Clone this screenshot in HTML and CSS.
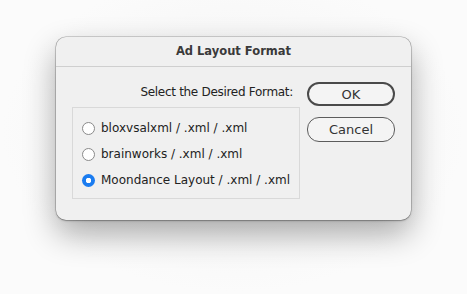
FILE: index.html
```html
<!DOCTYPE html>
<html>
<head>
	<meta charset="UTF-8">
	<title>Ad Layout Format</title>
<link rel="stylesheet" href="styles.css">
</head>
<body>

  <div class="dialog">
    <div class="titel">Ad Layout Format</div>

    <div class="inhalt">
      <div class="links">
        <div class="frage">Select the Desired Format:</div>
        <div class="gruppe">
          <label class="option"><span class="radio"></span>bloxvsalxml / .xml / .xml</label>
          <label class="option"><span class="radio"></span>brainworks / .xml / .xml</label>
          <label class="option"><span class="radio an"></span>Moondance Layout / .xml / .xml</label>
        </div>
      </div>

      <div class="knoepfe">
        <button type="button" class="knopf standard">OK</button>
        <button type="button" class="knopf">Cancel</button>
      </div>
    </div>
  </div>

</body>
</html>
```

FILE: styles.css
```css
html {
	background-color: #fbfbfb;
}
body {
	margin: 0;
	padding: 37px 0 0 56px;
	height: 294px;
	box-sizing: border-box;
	overflow: hidden;
	background: radial-gradient(ellipse at 50% 45%, #f2f2f2 0, #fbfbfb 70%);
	font-family: "DejaVu Sans", sans-serif;
	font-size: 12px;
	color: #222222;
}
.dialog {
	width: 355px;
	height: 183px;
	background-color: #f0f0f0;
	border-radius: 10px;
	box-shadow: 0 0 0 0.5px rgba(0,0,0,0.3), 0 1px 2px rgba(0,0,0,0.25), 0 14px 32px rgba(0,0,0,0.32);
	overflow: hidden;
}
.titel {
	height: 29px;
	line-height: 29px;
	text-align: center;
	font-weight: bold;
	font-size: 11.5px;
	color: #3a3a3a;
	border-bottom: 1px solid #cfcfcf;
}
.inhalt {
	display: flex;
	gap: 7px;
	padding: 15px 16px 0 16px;
}
.links {
	width: 228px;
}
.frage {
	text-align: right;
	padding: 2px 7px 0 0;
	height: 16px;
	line-height: 16px;
	margin-bottom: 7px;
	letter-spacing: -0.3px;
}
.gruppe {
	border: 1px solid #d9d9d9;
	display: flex;
	flex-direction: column;
	gap: 13px;
	padding: 14px 0 0 9px;
	box-sizing: border-box;
	height: 92px;
}
.option {
	display: flex;
	align-items: center;
	gap: 6px;
	height: 13px;
	line-height: 13px;
}
.radio {
	width: 11px;
	height: 11px;
	border: 1px solid #8a8a8a;
	border-radius: 50%;
	background-color: #ffffff;
	flex: none;
}
.radio.an {
	width: 13px;
	height: 13px;
	border: none;
	background: radial-gradient(circle, #ffffff 0 2.5px, #1b7cf0 3px);
}
.knoepfe {
	display: flex;
	flex-direction: column;
	gap: 11px;
}
.knopf {
	width: 88px;
	height: 25px;
	font-family: inherit;
	font-size: 13px;
	color: #333333;
	background-color: #f4f4f4;
	border: 1px solid #5c5c5c;
	border-radius: 12px;
	padding: 0;
}
.knopf.standard {
	height: 24px;
	border: 2px solid #4a4a4a;
}
```
